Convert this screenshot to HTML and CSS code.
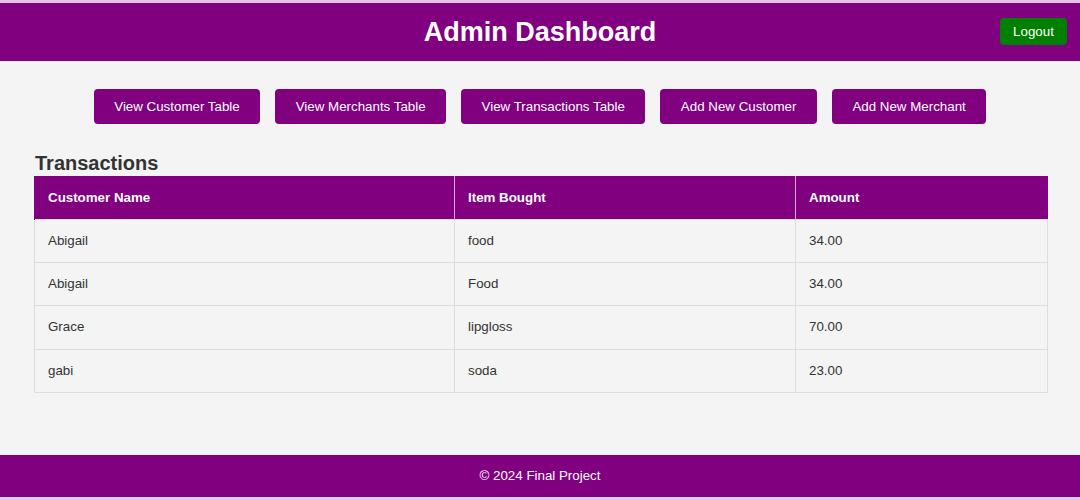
FILE: index.html
```html
<!DOCTYPE html>
<html lang="en">
<head>
<meta charset="utf-8">
<title>Admin Dashboard</title>
<link rel="stylesheet" href="styles.css">
</head>
<body>
<header class="topbar">
  <div class="topbar-side"></div>
  <h1 class="title">Admin Dashboard</h1>
  <div class="topbar-side topbar-right">
    <button class="logout">Logout</button>
  </div>
</header>

<nav class="actions">
  <button class="action">View Customer Table</button>
  <button class="action">View Merchants Table</button>
  <button class="action">View Transactions Table</button>
  <button class="action">Add New Customer</button>
  <button class="action">Add New Merchant</button>
</nav>

<main class="content">
  <h2 class="section-title">Transactions</h2>
  <table class="data">
    <colgroup>
      <col class="c1">
      <col class="c2">
      <col class="c3">
    </colgroup>
    <thead>
      <tr><th>Customer Name</th><th>Item Bought</th><th>Amount</th></tr>
    </thead>
    <tbody>
      <tr><td>Abigail</td><td>food</td><td>34.00</td></tr>
      <tr><td>Abigail</td><td>Food</td><td>34.00</td></tr>
      <tr class="tall"><td>Grace</td><td>lipgloss</td><td>70.00</td></tr>
      <tr><td>gabi</td><td>soda</td><td>23.00</td></tr>
    </tbody>
  </table>
</main>

<footer class="footer">© 2024 Final Project</footer>
<div class="bottom-line"></div>
</body>
</html>
```

FILE: styles.css
```css
* { box-sizing: border-box; }

html, body {
  margin: 0;
  padding: 0;
}

body {
  background: #f4f4f4;
  color: #333;
  font-family: "Liberation Sans", Arial, sans-serif;
  font-size: 13.33px;
  border-top: 3px solid #e2c4e2;
}

.topbar {
  height: 58px;
  background: #800080;
  display: grid;
  grid-template-columns: 1fr auto 1fr;
  align-items: center;
}

.title {
  margin: 0;
  color: #fff;
  font-size: 27px;
  font-weight: bold;
  line-height: 32px;
}

.topbar-right {
  display: flex;
  justify-content: flex-end;
  padding-right: 13px;
  padding-bottom: 1px;
}

.logout {
  background: #008000;
  color: #fff;
  border: none;
  border-radius: 4px;
  font-family: inherit;
  font-size: 13.33px;
  line-height: 17px;
  padding: 5px 13px;
  width: 67px;
  height: 27px;
}

.actions {
  display: flex;
  justify-content: center;
  gap: 15px;
  margin-top: 28px;
}

.action {
  background: #800080;
  color: #fff;
  border: none;
  border-radius: 4px;
  font-family: inherit;
  font-size: 13.33px;
  line-height: 15px;
  height: 35px;
  padding: 10px 20.5px;
}

.content {
  padding: 0 33px 0 34px;
  margin-top: 28px;
  margin-bottom: 62px;
}

.section-title {
  margin: 0 0 1px 1px;
  font-size: 20px;
  line-height: 23px;
  font-weight: bold;
  color: #333;
}

.data {
  width: 1013px;
  border-collapse: collapse;
  table-layout: fixed;
}

.c1 { width: 420px; }
.c2 { width: 341px; }
.c3 { width: 252px; }

.data th {
  background: #800080;
  color: #fff;
  text-align: left;
  font-weight: bold;
  padding: 12px 13px;
  line-height: 17px;
  height: 43px;
  border-left: 1px solid #d9a8d9;
}

.data th:first-child { border-left: 1px solid #800080; }

.data td {
  padding: 12px 13px;
  line-height: 18px;
  height: 43px;
  border: 1px solid #dddddd;
  color: #333;
}

.data tr.tall td { height: 44px; }

.data tbody tr:last-child td { border-top-color: #ececec; }

.footer {
  height: 42px;
  background: #800080;
  color: #fff;
  text-align: center;
  line-height: 42px;
}

.bottom-line {
  height: 3px;
  background: #d6d0ee;
}
```
